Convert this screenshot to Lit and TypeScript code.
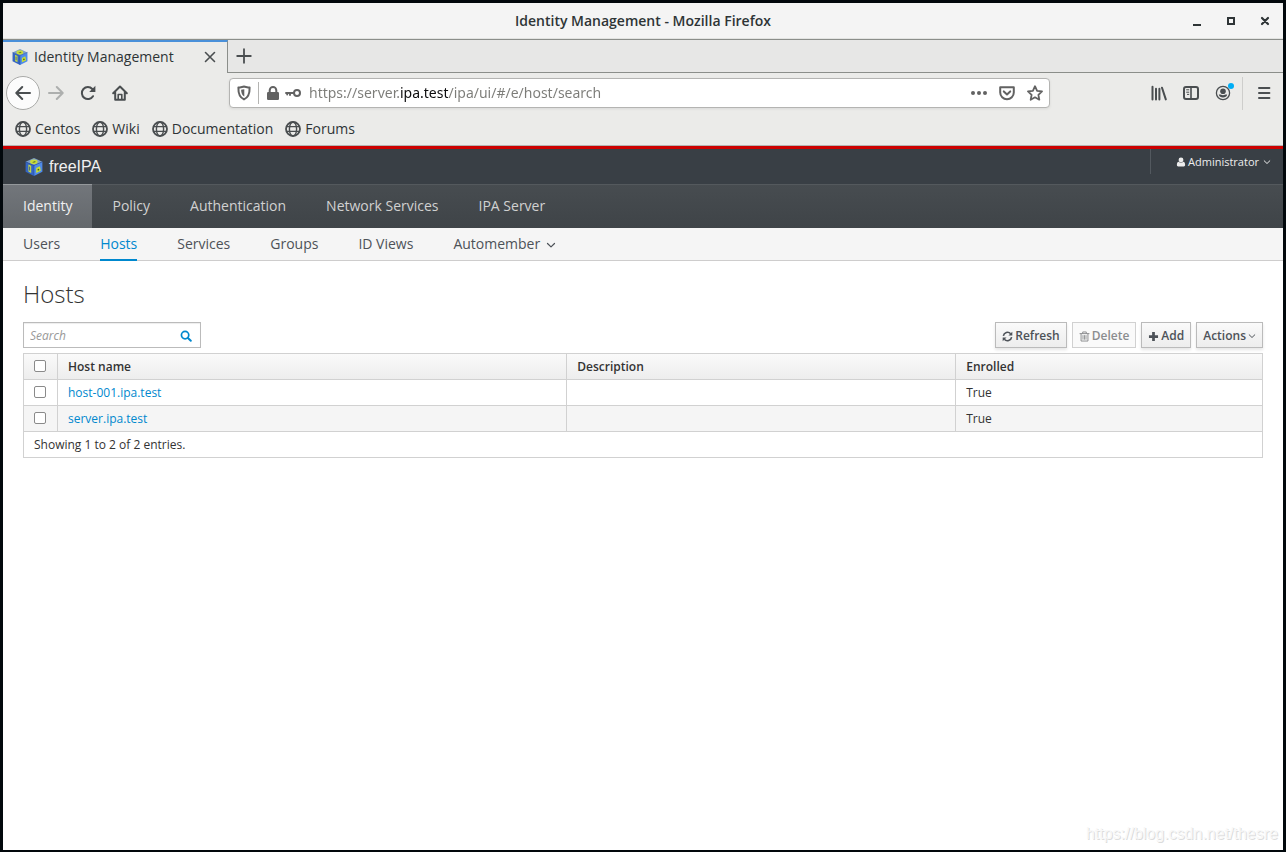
import { LitElement, html, svg, css } from "lit";
import { customElement, state } from "lit/decorators.js";

const cube = html`<svg class="cube" viewBox="0 0 18 18" aria-hidden="true">
  <path d="M9 0 17.4 3.8 9 7.6 0.6 3.8Z" fill="#7d9fc9" />
  <path d="M0.6 3.8 9 7.4V18L0.6 13.8Z" fill="#3465c4" />
  <path d="M17.4 3.8 9 7.4V18L17.4 13.8Z" fill="#4f8bea" />
  <ellipse cx="8.8" cy="3.8" rx="3.8" ry="2.3" fill="#c9dd3c" />
  <path d="M7 4.2 10 3l.8 1-2 .8Z" fill="#5f7a30" />
  <path d="M3.4 6.6 6.2 7.8V15L3.4 13.6Z" fill="#c3d84a" />
  <path d="M4.6 8.6v4" stroke="#284b8c" stroke-width=".8" />
  <path d="M11.2 10 15 8.2 15.8 12.8 11.2 15Z" fill="#c9de35" />
  <circle cx="13.4" cy="11.7" r=".9" fill="#41631f" />
  <path d="M.6 3.8 9 7.4l8.4-3.6M9 7.4V18" stroke="#2a4f9c" stroke-width=".6" fill="none" />
</svg>`;

const icon = (body: unknown, cls = "i16", box = 16) =>
  html`<svg class=${cls} viewBox="0 0 ${box} ${box}" fill="none" stroke="currentColor" stroke-width="2" stroke-linecap="round" stroke-linejoin="round" aria-hidden="true">${body}</svg>`;

const icons = {
  close: svg`<path d="M3.5 3.5 12.5 12.5M12.5 3.5 3.5 12.5" stroke-width="1.6"/>`,
  plus: svg`<path d="M8 1.2V14.8M1.2 8H14.8" stroke-width="1.8"/>`,
  back: svg`<path d="M15 8H1.5M7.2 2 1.3 8 7.2 14"/>`,
  forward: svg`<path d="M1 8H14.5M8.8 2 14.7 8 8.8 14"/>`,
  reload: svg`<path d="M13 11.2A6 6 0 1 1 12.3 4L13.3 5.2"/><path d="M15.4 .8V7H9.2Z" fill="currentColor" stroke="none"/>`,
  home: svg`<path d="M1.2 8.2 8 1.5 14.8 8.2M3.2 7.5V14.8H12.8V7.5"/><path d="M6.2 14V9.5h3.6V14" stroke-width="1.6"/>`,
  shield: svg`<path d="M8 1.6C10.2 2 12 2.4 13.6 2.6C13.8 9 12 12.6 8 14.4C4 12.6 2.2 9 2.4 2.6C4 2.4 5.8 2 8 1.6Z"/><path d="M8.3 4.2C6.9 4.5 6 4.6 5.1 4.8C5.2 8.2 6.2 10.3 8.3 11.6Z" fill="currentColor" stroke="none"/>`,
  lock: svg`<rect x="2" y="7" width="12" height="8" rx="1.2" fill="currentColor" stroke="none"/><path d="M4.7 8V5.2a3.3 3.3 0 0 1 6.6 0V8"/>`,
  key: svg`<circle cx="12" cy="8" r="3" stroke-width="2"/><path d="M9 8H1M2.2 8.4V9.5M5 8.4V10" stroke-width="1.9"/>`,
  dots: svg`<g fill="currentColor" stroke="none"><circle cx="2" cy="8" r="2"/><circle cx="8" cy="8" r="2"/><circle cx="14" cy="8" r="2"/></g>`,
  pocket: svg`<path d="M1.2 2.2H14.8V7.4A6.8 6.8 0 0 1 1.2 7.4Z"/><path d="M4.8 6.4 8 9.4 11.2 6.4"/>`,
  star: svg`<path d="M8 1.2 10.1 5.8 15 6.4 11.4 9.8 12.3 14.7 8 12.3 3.7 14.7 4.6 9.8 1 6.4 5.9 5.8Z" stroke-width="1.8"/>`,
  library: svg`<path d="M1.5 1.8V14.4M5 3.8V14.4M8.4 3.8V14.4M11 2.8 14.8 14.4"/>`,
  sidebar: svg`<rect x="1" y="2" width="14" height="12" rx="2"/><path d="M8 2V14" stroke-width="1.6"/><path d="M3.6 4.8H5.8M3.6 7.2H5.8M4.4 9.4H5.8" stroke-width="1"/>`,
  account: svg`<circle cx="8" cy="8" r="6.6" stroke-width="1.3"/><circle cx="8" cy="6.2" r="2.8" fill="currentColor" stroke="none"/><path d="M3.8 9.6C5.2 9.2 6.4 10.2 8 10.2C9.6 10.2 10.8 9.2 12.2 9.6C11.8 11.8 10 12.6 8 12.6C6 12.6 4.2 11.8 3.8 9.6Z" fill="currentColor" stroke="none"/>`,
  menu: svg`<path d="M3 3H13.4M3 8H13.4M3 13H13.4"/>`,
  globe: svg`<circle cx="8" cy="8" r="7" stroke-width="1.8"/><ellipse cx="8" cy="8" rx="3.6" ry="7" stroke-width="1.4"/><path d="M1.6 5.6H14.4M1.6 10.4H14.4" stroke-width="1.4"/>`,
  minimize: svg`<path d="M4 12H12" stroke-linecap="butt"/>`,
  maximize: svg`<rect x="5" y="5" width="6" height="6" stroke-linejoin="miter"/>`,
  winClose: svg`<path d="M5 5 11 11M11 5 5 11" stroke-width="2.2"/>`,
  user: svg`<g fill="currentColor" stroke="none"><circle cx="8" cy="4.6" r="3.9"/><path d="M4.4 7.6C2.2 8 1.4 10 1.4 12.4C1.4 14 2.2 15 3.6 15H12.4C13.8 15 14.6 14 14.6 12.4C14.6 10 13.8 8 11.6 7.6C9.8 9.4 6.2 9.4 4.4 7.6Z"/></g>`,
  chevron: svg`<path d="M2.4 5.6 8 11 13.6 5.6"/>`,
  search: svg`<circle cx="6.8" cy="6.8" r="4.9" stroke-width="2.3"/><path d="M10.6 10.6 14.4 14.4" stroke-width="2.6"/>`,
  refresh: svg`<path d="M2 7A6.1 6.1 0 0 1 12.6 3.9M14 9A6.1 6.1 0 0 1 3.4 12.1" stroke-width="2.3" stroke-linecap="butt"/><path d="M15 1V6.6H9.4ZM1 15V9.4H6.6Z" fill="currentColor" stroke="none"/>`,
  trash: svg`<path d="M1.4 3.8H14.6M5.4 3.6V1.4H10.6V3.6M3 4V14.6H13V4" stroke-width="1.4"/><path d="M5.8 6.6V12M8 6.6V12M10.2 6.6V12" stroke-width="1.3"/>`,
  add: svg`<path d="M8 1.4V14.6M1.4 8H14.6" stroke-width="4" stroke-linecap="butt"/>`,
};

@customElement("browser-chrome")
class BrowserChrome extends LitElement {
  static styles = css`
    :host {
      display: block;
      font: 14px/20px "Open Sans", sans-serif;
      color: #2e3436;
      background: #ebebe9;
    }
    button {
      display: flex;
      align-items: center;
      justify-content: center;
      padding: 0;
      border: 0;
      background: none;
      color: #4a4e50;
      font: inherit;
    }
    .i16 { width: 16px; height: 16px; display: block; flex: none; }
    .cube { width: 16px; height: 16px; flex: none; }
    .titlebar {
      display: grid;
      grid-template-columns: 1fr auto 1fr;
      align-items: center;
      height: 36px;
      box-sizing: border-box;
      background: #f4f4f4;
      border-bottom: 1px solid #e2e3e1;
      border-radius: 5px 5px 0 0;
    }
    .title {
      grid-column: 2;
      margin: 0;
      font: 600 14px/20px "Open Sans", sans-serif;
    }
    .controls { display: flex; justify-content: flex-end; gap: 18px; padding-right: 10px; }
    .controls button { color: #2e3436; }
    .tabs {
      display: flex;
      height: 34px;
      box-sizing: border-box;
      border-top: 1px solid #8b8e8a;
      background: #e7e7e6;
    }
    .tab {
      display: flex;
      align-items: center;
      width: 225px;
      box-sizing: border-box;
      padding: 0 9px 2px;
      border-top: 2px solid #4a90d9;
      border-right: 1px solid #8b8e8a;
      background: #ebebe9;
    }
    .tab-label { gap: 6px; flex: 1; justify-content: flex-start; color: #2e3436; }
    .strip { display: flex; flex: 1; padding-left: 8px; border-bottom: 1px solid #8b8e8a; }
    .toolbar { display: flex; align-items: center; height: 40px; padding-left: 3px; }
    .nav { display: flex; align-items: center; gap: 16px; flex: none; width: 223px; }
    .back {
      width: 34px;
      height: 34px;
      box-sizing: border-box;
      border: 1px solid #a9aaa8;
      border-radius: 50%;
      background: #fcfcfc;
    }
    .nav .back { margin-right: -8px; }
    .off { color: #adafae; }
    .urlbar {
      display: flex;
      align-items: center;
      flex: 1;
      height: 30px;
      box-sizing: border-box;
      padding: 0 6px;
      border: 1px solid #b4b4b2;
      border-radius: 4px;
      background: #fff;
      box-shadow: 0 1px 3px rgba(0, 0, 0, 0.08);
      color: #626262;
    }
    .urlbar button { color: #626262; }
    .sep { width: 1px; height: 22px; margin: 0 6px; background: #b4b4b2; }
    .ids { display: flex; gap: 4px; }
    .url {
      flex: 1;
      min-width: 0;
      margin: 0 8px;
      padding: 0;
      border: 0;
      outline: 0;
      font: 14px/24px "Noto Sans", sans-serif;
      color: #7c7c78;
      background: linear-gradient(90deg, #7c7c78 91px, #0c0c0d 91px 139px, #7c7c78 139px);
      -webkit-background-clip: text;
      background-clip: text;
      -webkit-text-fill-color: transparent;
    }
    .actions { display: flex; gap: 12px; }
    .tools {
      display: flex;
      align-items: center;
      justify-content: flex-end;
      gap: 16px;
      flex: none;
      width: 222px;
      padding-right: 11px;
    }
    .account { position: relative; }
    .dot { position: absolute; right: -3px; top: -2px; width: 6px; height: 6px; border-radius: 50%; background: #00adf5; }
    .rule { width: 1px; height: 33px; background: #cececc; margin: 0 -3px 0 -5px; }
    .bookmarks {
      display: flex;
      gap: 12px;
      height: 33px;
      box-sizing: border-box;
      padding: 6px 12px;
      border-bottom: 1px solid #b4b4b2;
    }
    .bookmarks a { display: flex; align-items: center; gap: 4px; color: #2e3436; text-decoration: none; }
    .bookmarks svg { color: #4a4e50; }
  `;

  render() {
    return html`
      <div class="titlebar">
        <p class="title">Identity Management - Mozilla Firefox</p>
        <div class="controls">
          <button aria-label="Minimize">${icon(icons.minimize)}</button>
          <button aria-label="Maximize">${icon(icons.maximize)}</button>
          <button aria-label="Close window">${icon(icons.winClose)}</button>
        </div>
      </div>
      <div class="tabs">
        <div class="tab">
          <button class="tab-label">${cube}<span>Identity Management</span></button>
          <button aria-label="Close tab">${icon(icons.close)}</button>
        </div>
        <div class="strip"><button aria-label="New tab">${icon(icons.plus)}</button></div>
      </div>
      <div class="toolbar">
        <div class="nav">
          <button class="back" aria-label="Back">${icon(icons.back)}</button>
          <button class="off" aria-label="Forward" disabled>${icon(icons.forward)}</button>
          <button aria-label="Reload">${icon(icons.reload)}</button>
          <button aria-label="Home">${icon(icons.home)}</button>
        </div>
        <div class="urlbar">
          <button aria-label="Tracking protection">${icon(icons.shield)}</button>
          <span class="sep"></span>
          <div class="ids">
            <button aria-label="Site information">${icon(icons.lock)}</button>
            <button aria-label="Saved logins">${icon(icons.key)}</button>
          </div>
          <input class="url" aria-label="Address" .value=${"https://server.ipa.test/ipa/ui/#/e/host/search"} />
          <div class="actions">
            <button aria-label="Page actions">${icon(icons.dots)}</button>
            <button aria-label="Save to Pocket">${icon(icons.pocket)}</button>
            <button aria-label="Bookmark this page">${icon(icons.star)}</button>
          </div>
        </div>
        <div class="tools">
          <button aria-label="Library">${icon(icons.library)}</button>
          <button aria-label="Sidebars">${icon(icons.sidebar)}</button>
          <button class="account" aria-label="Account">${icon(icons.account)}<span class="dot"></span></button>
          <span class="rule"></span>
          <button aria-label="Menu">${icon(icons.menu)}</button>
        </div>
      </div>
      <nav class="bookmarks">
        ${["Centos", "Wiki", "Documentation", "Forums"].map((b) => html`<a href="#">${icon(icons.globe)}${b}</a>`)}
      </nav>
    `;
  }
}

@customElement("ipa-console")
class IpaConsole extends LitElement {
  @state() hosts = [
    { name: "host-001.ipa.test", description: "", enrolled: "True" },
    { name: "server.ipa.test", description: "", enrolled: "True" },
  ];

  static styles = css`
    :host {
      display: block;
      font: 12px/20px "Open Sans", sans-serif;
      color: #333;
      background: #fff;
    }
    a { text-decoration: none; }
    .i12 { width: 12px; height: 12px; }
    .i11 { width: 11px; height: 11px; }
    .i10 { width: 10px; height: 10px; }
    .i8 { width: 8px; height: 8px; }
    svg { display: block; flex: none; }
    .cube { width: 18px; height: 18px; }
    .masthead {
      display: flex;
      align-items: center;
      justify-content: space-between;
      height: 38px;
      box-sizing: border-box;
      padding-left: 22px;
      border-top: 3px solid #c00;
      background: #393f45;
    }
    .brand {
      display: flex;
      align-items: center;
      gap: 6px;
      color: #f0f0f0;
      font: 16px/20px "Liberation Sans", sans-serif;
    }
    .user {
      display: flex;
      align-items: center;
      align-self: flex-start;
      gap: 2px;
      height: 25px;
      padding: 0 12px 0 25px;
      border: 0;
      border-left: 1px solid #53595f;
      background: none;
      color: #ededed;
      font: 11px/20px "Open Sans", sans-serif;
    }
    .user .i8 { margin-left: 2px; }
    .primary {
      display: flex;
      height: 44px;
      box-sizing: border-box;
      border-top: 1px solid #54595d;
      background: linear-gradient(#474c50, #3f4448);
    }
    .primary a { padding: 11px 20px; color: #d1d1d1; font-size: 14px; }
    .primary .on {
      margin-top: -1px;
      border-top: 1px solid #94989b;
      background: linear-gradient(#72767b, #64686c);
      color: #f1f1f1;
    }
    .secondary {
      display: flex;
      gap: 40px;
      height: 33px;
      box-sizing: border-box;
      padding: 0 20px;
      border-bottom: 1px solid #cecdcd;
      background: #f5f5f5;
    }
    .secondary a {
      display: flex;
      align-items: center;
      gap: 6px;
      height: 31px;
      color: #4d5258;
      font-size: 14px;
    }
    .secondary .on { color: #0088ce; border-bottom: 2px solid #0088ce; }
    .secondary .i10 { margin-top: 3px; }
    main { padding: 20px; }
    h1 { margin: 0 0 16px; font: 300 24px/25px "Open Sans", sans-serif; }
    .bar { display: flex; justify-content: space-between; margin-bottom: 5px; }
    .search {
      display: flex;
      align-items: center;
      width: 178px;
      height: 26px;
      box-sizing: border-box;
      padding: 2px 8px 0 6px;
      border: 1px solid #bbb;
      box-shadow: inset 0 1px 1px rgba(3, 3, 3, 0.075);
    }
    .search input {
      flex: 1;
      min-width: 0;
      padding: 0;
      border: 0;
      outline: 0;
      background: none;
      font: 12px/20px "Open Sans", sans-serif;
    }
    .search input::placeholder { color: #999; font-style: italic; }
    .search button { padding: 0; border: 0; background: none; color: #0088ce; }
    .buttons { display: flex; gap: 5px; }
    .btn {
      display: flex;
      align-items: center;
      gap: 2px;
      height: 26px;
      box-sizing: border-box;
      padding: 2px 6px 0;
      border: 1px solid #bbb;
      background: linear-gradient(#fafafa, #ededed);
      box-shadow: 0 2px 3px rgba(3, 3, 3, 0.1);
      color: #4d5258;
      font: 600 12px/20px "Open Sans", sans-serif;
    }
    .btn:disabled { border-color: #d1d1d1; background: #fafafa; box-shadow: none; color: #8b8d8f; }
    table {
      width: 100%;
      table-layout: fixed;
      border-collapse: collapse;
      border: 1px solid #d1d1d1;
    }
    th, td {
      height: 25px;
      padding: 0 10px;
      border: 1px solid #d1d1d1;
      text-align: left;
      font-weight: 400;
    }
    thead tr { background: linear-gradient(#fafafa, #ededed); }
    thead th { font-weight: 600; }
    tbody tr:nth-child(even) { background: #f5f5f5; }
    td a { color: #0088ce; }
    .c-check { width: 34px; }
    .c-name { width: 41.1%; }
    .c-desc { width: 31.4%; }
    input[type="checkbox"] {
      appearance: none;
      display: block;
      width: 12px;
      height: 12px;
      margin: 0 0 1px;
      border: 1px solid #8a8a8a;
      border-radius: 2px;
      background: #fff;
    }
    input[type="checkbox"]:checked { background: #0088ce; }
  `;

  render() {
    return html`
      <header class="masthead">
        <a class="brand" href="#">${cube}<span>freeIPA</span></a>
        <button class="user">${icon(icons.user, "i10")}<span>Administrator</span>${icon(icons.chevron, "i8")}</button>
      </header>
      <nav class="primary">
        ${["Identity", "Policy", "Authentication", "Network Services", "IPA Server"].map(
          (n) => html`<a href="#" class=${n === "Identity" ? "on" : ""}>${n}</a>`
        )}
      </nav>
      <nav class="secondary">
        ${["Users", "Hosts", "Services", "Groups", "ID Views"].map(
          (n) => html`<a href="#" class=${n === "Hosts" ? "on" : ""}>${n}</a>`
        )}
        <a href="#">Automember${icon(icons.chevron, "i10")}</a>
      </nav>
      <main>
        <h1>Hosts</h1>
        <div class="bar">
          <div class="search">
            <input type="text" placeholder="Search" aria-label="Search hosts" />
            <button aria-label="Search">${icon(icons.search, "i12")}</button>
          </div>
          <div class="buttons">
            <button class="btn">${icon(icons.refresh, "i11")}Refresh</button>
            <button class="btn" disabled>${icon(icons.trash, "i11")}Delete</button>
            <button class="btn">${icon(icons.add, "i11")}Add</button>
            <button class="btn">Actions${icon(icons.chevron, "i8")}</button>
          </div>
        </div>
        <table>
          <colgroup><col class="c-check" /><col class="c-name" /><col class="c-desc" /><col /></colgroup>
          <thead>
            <tr>
              <td><input type="checkbox" aria-label="Select all hosts" /></td>
              <th>Host name</th>
              <th>Description</th>
              <th>Enrolled</th>
            </tr>
          </thead>
          <tbody>
            ${this.hosts.map(
              (h) => html`<tr>
                <td><input type="checkbox" aria-label=${"Select " + h.name} /></td>
                <td><a href="#">${h.name}</a></td>
                <td>${h.description}</td>
                <td>${h.enrolled}</td>
              </tr>`
            )}
          </tbody>
          <tfoot>
            <tr><td colspan="4">Showing 1 to 2 of 2 entries.</td></tr>
          </tfoot>
        </table>
      </main>
    `;
  }
}

@customElement("app-root")
class AppRoot extends LitElement {
  static styles = css`
    :host {
      position: relative;
      display: flex;
      flex-direction: column;
      min-height: 100vh;
      box-sizing: border-box;
      padding: 3px 3px 2px;
      background: #02080c;
    }
    .page { flex: 1; }
    .watermark {
      position: absolute;
      right: 8px;
      bottom: 9px;
      font: 16px/18px "Liberation Sans", sans-serif;
      color: #f8f8f8;
      text-shadow: 1px 1px 0 #dcdcdc;
    }
  `;

  render() {
    return html`
      <browser-chrome></browser-chrome>
      <ipa-console class="page"></ipa-console>
      <span class="watermark">https://blog.csdn.net/thesre</span>
    `;
  }
}
